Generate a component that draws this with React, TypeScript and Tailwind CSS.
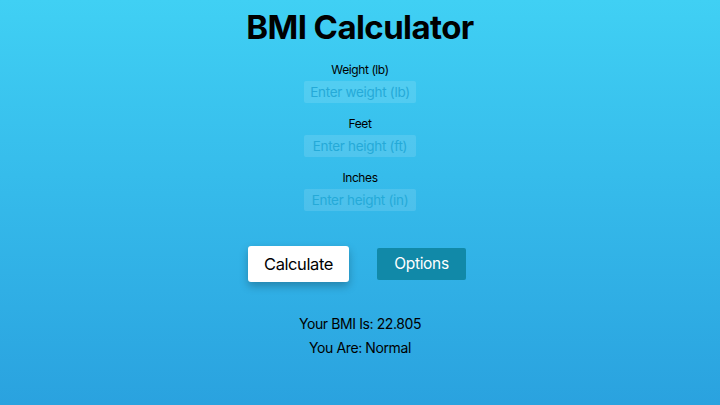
export default function App() {
  const fields = [
    { label: "Weight (lb)", placeholder: "Enter weight (lb)" },
    { label: "Feet", placeholder: "Enter height (ft)" },
    { label: "Inches", placeholder: "Enter height (in)" },
  ];

  return (
    <div className="flex h-[405px] w-[720px] flex-col items-center bg-gradient-to-b from-[#40d0f4] to-[#2aa2df] font-['Inter','Liberation_Sans',sans-serif] text-black">
      <h1 className="mt-[6px] text-[33px] font-bold leading-[42px] tracking-[-0.6px]">BMI Calculator</h1>

      <div className="mt-[13px] flex flex-col items-center gap-[12px]">
        {fields.map((f) => (
          <div key={f.label} className="flex flex-col items-center">
            <label className="text-[12px] leading-[18px] tracking-[-0.4px]">{f.label}</label>
            <input
              placeholder={f.placeholder}
              className="mt-[2px] h-[22px] w-[112px] rounded-[2px] bg-white/[0.12] text-center text-[13.5px] tracking-[-0.3px] outline-none placeholder:text-[#25aad8]"
            />
          </div>
        ))}
      </div>

      <div className="mr-[6px] mt-[35px] flex items-center gap-[28px]">
        <button className="h-[36px] w-[101px] rounded-[3px] bg-white text-[16.5px] tracking-[-0.4px] shadow-[0_4px_8px_rgba(0,0,0,0.25)]">
          Calculate
        </button>
        <button className="h-[32px] w-[89px] rounded-[2px] bg-[#1189a8] text-[15.5px] tracking-[-0.3px] text-white">
          Options
        </button>
      </div>

      <p className="mt-[32px] text-[14px] leading-[20px] tracking-[-0.4px]">Your BMI Is: 22.805</p>
      <p className="mt-[4px] text-[14px] leading-[20px] tracking-[-0.4px]">You Are: Normal</p>
    </div>
  );
}
